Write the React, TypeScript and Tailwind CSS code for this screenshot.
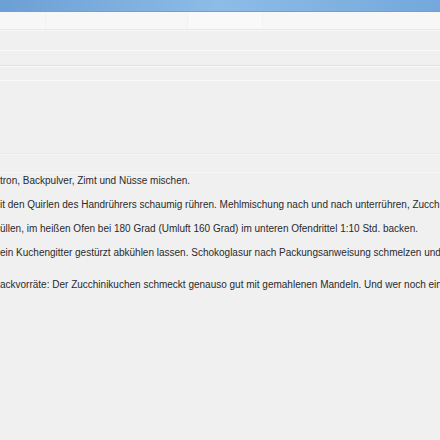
import React from "react";

const lines = [
  "tron, Backpulver, Zimt und Nüsse mischen.",
  "it den Quirlen des Handrührers schaumig rühren. Mehlmischung nach und nach unterrühren, Zucchiniraspel",
  "üllen, im heißen Ofen bei 180 Grad (Umluft 160 Grad) im unteren Ofendrittel 1:10 Std. backen.",
  "ein Kuchengitter gestürzt abkühlen lassen. Schokoglasur nach Packungsanweisung schmelzen und den Kuchen",
];

const App = () => {
  return (
    <div className="w-[440px] h-[440px] overflow-hidden bg-[#f0f0f0] flex flex-col" style={{ fontFamily: '"Liberation Sans", Arial, sans-serif' }}>
      {/* Window title bar */}
      <div className="h-[12px] shrink-0 bg-gradient-to-r from-[#6c9fd5] via-[#8dbce6] to-[#74a8dc] border-b border-[#7f9cb8]" />

      {/* Toolbar strip */}
      <div className="h-[18px] shrink-0 flex bg-[#f7f7f7] border-b border-[#e6e6e6]">
        <div className="w-[46px] border-r border-[#f2f2f2]" />
        <div className="w-[142px] border-r border-[#f2f2f2]" />
        <div className="w-[75px] bg-[#f9f9f9] border-r border-[#f2f2f2]" />
        <div className="flex-1" />
      </div>

      <div className="h-[21px] shrink-0 border-t border-[#fafafa] border-b border-[#c6c6c6]" />
      <div className="h-[15px] shrink-0 border-b border-[#e2e2e2]" />
      <div className="h-[15px] shrink-0 border-t border-[#fafafa] border-b border-[#c8c8c8]" />

      {/* Empty area */}
      <div className="h-[73px] shrink-0 border-b border-[#e8e8e8]" />
      <div className="h-[19px] shrink-0 border-t border-[#f6f6f6] border-b border-[#d2d2d2]" />

      {/* Recipe text */}
      <div className="text-[10px] leading-[24px] text-[#2a2a2a] whitespace-nowrap -mt-[4px]">
        {lines.map((l) => (
          <p key={l}>{l}</p>
        ))}
        <p className="mt-[8px]">ackvorräte: Der Zucchinikuchen schmeckt genauso gut mit gemahlenen Mandeln. Und wer noch einen Rest</p>
      </div>
    </div>
  );
};

export default App;
